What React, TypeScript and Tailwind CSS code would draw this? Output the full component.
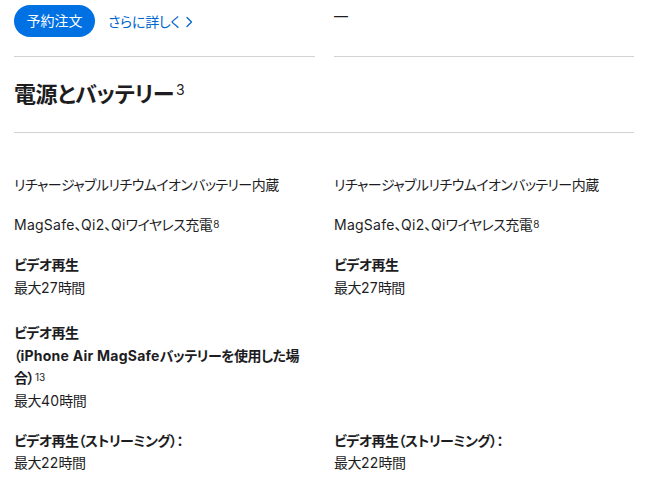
const jp = "font-['Inter','Noto_Sans_CJK_JP',sans-serif] [font-feature-settings:'palt']";

function Sup({ children }: { children: React.ReactNode }) {
  return <sup className="text-[10px] font-normal tracking-normal relative -top-[2px] ml-[1px]">{children}</sup>;
}

function Latin({ children }: { children: React.ReactNode }) {
  return <span className="tracking-[0.25px]">{children}</span>;
}

function Chevron() {
  return (
    <svg width="7" height="12" viewBox="0 0 7 12" className="inline-block ml-[6px] -mt-[2px]" fill="none">
      <path d="M1 1.5 5.5 6 1 10.5" stroke="#0066cc" strokeWidth="1.3" strokeLinecap="round" strokeLinejoin="round" />
    </svg>
  );
}

export default function App() {
  return (
    <div className={`${jp} w-[650px] h-[480px] overflow-hidden bg-white text-[#1d1d1f] px-[14px]`}>
      {/* buy row */}
      <div className="grid grid-cols-[301px_300px] gap-x-[19px]">
        <div className="border-b border-[#d2d2d7] pt-[5px] pb-[19px]">
          <div className="flex items-center gap-[13px]">
            <button className="h-[32px] w-[81px] rounded-full bg-[#0071e3] text-white text-[14px] leading-none">
              予約注文
            </button>
            <a className="text-[14px] text-[#0066cc] tracking-[-0.3px]">
              さらに詳しく
              <Chevron />
            </a>
          </div>
        </div>
        <div className="border-b border-[#d2d2d7] pt-[5px] pb-[19px]">
          <div className="h-[32px] text-[14px] leading-[22px]">—</div>
        </div>
      </div>

      {/* section title */}
      <div className="border-b border-[#d2d2d7] pt-[22px] pb-[23px] w-[620px]">
        <h2 className="text-[22px] font-bold leading-[30px] tracking-[-0.4px]">
          電源とバッテリー<sup className="text-[14px] font-normal tracking-normal ml-[2px] -top-[7px] relative">3</sup>
        </h2>
      </div>

      <div className="grid grid-cols-[301px_300px] gap-x-[19px] text-[14px] leading-[22.5px] tracking-[-0.55px] pt-[41px]">
        <p>リチャージャブルリチウムイオンバッテリー内蔵</p>
        <p>リチャージャブルリチウムイオンバッテリー内蔵</p>

        <p className="mt-[17.5px]">
          <Latin>MagSafe</Latin>、<Latin>Qi2</Latin>、<Latin>Qi</Latin>ワイヤレス充電<Sup>8</Sup>
        </p>
        <p className="mt-[17.5px]">
          <Latin>MagSafe</Latin>、<Latin>Qi2</Latin>、<Latin>Qi</Latin>ワイヤレス充電<Sup>8</Sup>
        </p>

        <div className="mt-[17.5px]">
          <p className="font-bold">ビデオ再生</p>
          <p>最大<Latin>27</Latin>時間</p>
        </div>
        <div className="mt-[17.5px]">
          <p className="font-bold">ビデオ再生</p>
          <p>最大<Latin>27</Latin>時間</p>
        </div>

        <div className="mt-[23px] pr-[6px]">
          <p className="font-bold">ビデオ再生</p>
          <p className="font-bold">
            （<Latin>iPhone Air MagSafe</Latin>バッテリーを使用した場合）<Sup>13</Sup>
          </p>
          <p>最大<Latin>40</Latin>時間</p>
        </div>
        <div className="mt-[23px]"></div>

        <div className="mt-[17.5px]">
          <p className="font-bold">ビデオ再生（ストリーミング）：</p>
          <p>最大<Latin>22</Latin>時間</p>
        </div>
        <div className="mt-[17.5px]">
          <p className="font-bold">ビデオ再生（ストリーミング）：</p>
          <p>最大<Latin>22</Latin>時間</p>
        </div>
      </div>
    </div>
  );
}
